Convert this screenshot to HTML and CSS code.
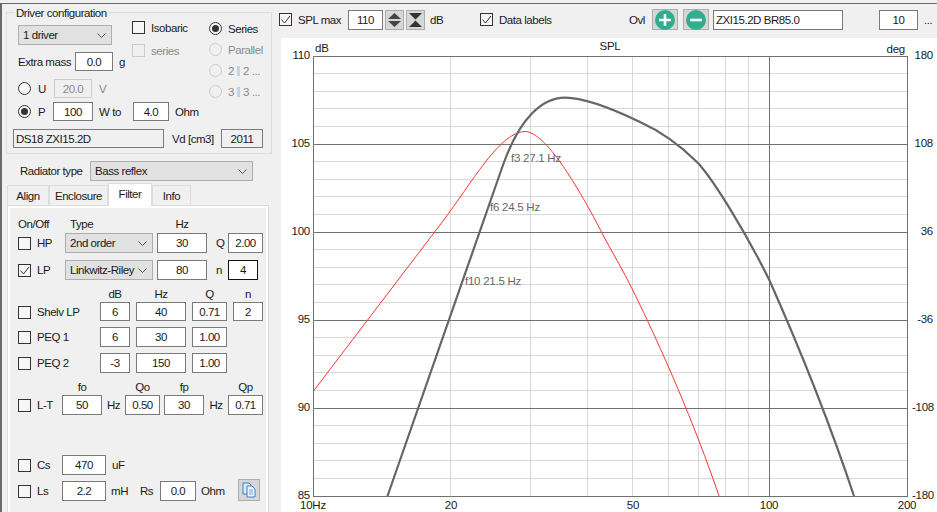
FILE: index.html
```html
<!DOCTYPE html>
<html lang="en">
<head>
    <meta charset="UTF-8">
    <title>Driver configuration</title>
    <link rel="stylesheet" href="styles.css">
</head>
<body>
<div class="app">
    <!-- left column -->
    <div class="side">
        <div class="group">
            <span class="legend">Driver configuration</span>
            <div class="config-top">
                <div class="config-left">
                    <div class="config-sub">
                        <div class="config-driver">
                            <div class="select driver-select">1 driver
                                <svg class="chev" viewBox="0 0 9 5"><path d="M.5.5l4 4 4-4"/></svg>
                            </div>
                            <div class="row extra-row">
                                <span class="extra-label">Extra mass</span>
                                <span class="field w38">0.0</span>
                                <span class="unit-g">g</span>
                            </div>
                        </div>
                        <div class="config-iso">
                            <div class="check"><i class="box"></i>Isobaric</div>
                            <div class="check off series-check"><i class="box"></i>series</div>
                        </div>
                    </div>
                    <div class="row u-row">
                        <div class="radio-wrap off-text"><i class="radio"></i><b>U</b></div>
                        <span class="field off w38">20.0</span>
                        <span class="unit off-text">V</span>
                    </div>
                    <div class="row p-row">
                        <div class="radio-wrap"><i class="radio on"></i><b>P</b></div>
                        <span class="field w40">100</span>
                        <span class="wto">W to</span>
                        <span class="field w36">4.0</span>
                        <span class="unit">Ohm</span>
                    </div>
                </div>
                <div class="config-right">
                    <div class="radio-line"><i class="radio on"></i>Series</div>
                    <div class="radio-line off"><i class="radio"></i>Parallel</div>
                    <div class="radio-line off"><i class="radio"></i>2 <em></em> 2 ...</div>
                    <div class="radio-line off"><i class="radio"></i>3 <em></em> 3 ...</div>
                </div>
            </div>
            <div class="row ds-row">
                <span class="field name">DS18 ZXI15.2D</span>
                <span class="vd">Vd [cm3]</span>
                <span class="field flat w42">2011</span>
            </div>
        </div>

        <div class="row radiator">
            <span class="radiator-label">Radiator type</span>
            <div class="select radiator-select">Bass reflex
                <svg class="chev" viewBox="0 0 9 5"><path d="M.5.5l4 4 4-4"/></svg>
            </div>
        </div>

        <div class="tabs">
            <span class="tab t-align">Align</span>
            <span class="tab t-encl">Enclosure</span>
            <span class="tab t-filter active">Filter</span>
            <span class="tab t-info">Info</span>
        </div>

        <div class="panel">
            <div class="filter">
                <div class="row head1">
                    <span class="h-onoff">On/Off</span>
                    <span class="h-type">Type</span>
                    <span class="h-hz">Hz</span>
                </div>
                <div class="row">
                    <div class="check c47"><i class="box"></i>HP</div>
                    <div class="select filter-select">2nd order
                        <svg class="chev" viewBox="0 0 9 5"><path d="M.5.5l4 4 4-4"/></svg>
                    </div>
                    <span class="field w50 ml4">30</span>
                    <span class="letter">Q</span>
                    <span class="field w35">2.00</span>
                </div>
                <div class="row lp-row">
                    <div class="check c47"><i class="box"><svg viewBox="0 0 11 11"><path d="M1.5 5.5l3 3.5 5.5-7"/></svg></i>LP</div>
                    <div class="select filter-select">Linkwitz-Riley
                        <svg class="chev" viewBox="0 0 9 5"><path d="M.5.5l4 4 4-4"/></svg>
                    </div>
                    <span class="field w50 ml4">80</span>
                    <span class="letter">n</span>
                    <span class="field w30 focus">4</span>
                </div>

                <div class="peq">
                    <span></span><span class="h">dB</span><span class="h">Hz</span><span class="h">Q</span><span class="h">n</span>
                    <div class="check"><i class="box"></i>Shelv LP</div>
                    <span class="field">6</span><span class="field">40</span><span class="field">0.71</span><span class="field">2</span>
                    <div class="check"><i class="box"></i>PEQ 1</div>
                    <span class="field">6</span><span class="field">30</span><span class="field">1.00</span><span></span>
                    <div class="check"><i class="box"></i>PEQ 2</div>
                    <span class="field">-3</span><span class="field">150</span><span class="field">1.00</span><span></span>
                </div>

                <div class="lt">
                    <span></span><span class="h">fo</span><span></span><span class="h">Qo</span><span></span><span class="h">fp</span><span></span><span class="h">Qp</span>
                    <div class="check"><i class="box"></i>L-T</div>
                    <span class="field">50</span><span class="mid">Hz</span><span class="field">0.50</span><span></span>
                    <span class="field">30</span><span class="mid">Hz</span><span class="field">0.71</span>
                </div>

                <div class="row cs-row">
                    <div class="check c44"><i class="box"></i>Cs</div>
                    <span class="field w44">470</span>
                    <span class="unit">uF</span>
                </div>
                <div class="row ls-row">
                    <div class="check c44"><i class="box"></i>Ls</div>
                    <span class="field w44">2.2</span>
                    <span class="mh">mH</span>
                    <span class="rs">Rs</span>
                    <span class="field w36">0.0</span>
                    <span class="unit ohm">Ohm</span>
                    <span class="btn copy">
                        <svg viewBox="0 0 14 16" width="14" height="16">
                            <path d="M1 1h6l2 2v9H1z" fill="#dce9f8" stroke="#3f7fc9"/>
                            <path d="M5 4h5l3 3v8H5z" fill="#eef4fb" stroke="#3f7fc9"/>
                            <path d="M7 8h4M7 10h4M7 12h4" stroke="#7da7da"/>
                        </svg>
                    </span>
                </div>
            </div>
        </div>
    </div>

    <!-- right column -->
    <div class="main">
        <div class="toolbar">
            <div class="check c69"><i class="box"><svg viewBox="0 0 11 11"><path d="M1.5 5.5l3 3.5 5.5-7"/></svg></i>SPL max</div>
            <span class="field w35">110</span>
            <span class="btn step">
                <svg viewBox="0 0 15 16" width="15" height="16"><path d="M7.5 1l6.5 6H1zM1 9h13l-6.5 6z" fill="#444"/></svg>
            </span>
            <span class="btn step">
                <svg viewBox="0 0 15 16" width="15" height="16"><path d="M1 1h13L7.5 7.5zM7.5 8.5L14 15H1z" fill="#333"/></svg>
            </span>
            <span class="db">dB</span>
            <div class="check c149"><i class="box"><svg viewBox="0 0 11 11"><path d="M1.5 5.5l3 3.5 5.5-7"/></svg></i>Data labels</div>
            <span class="ovl">Ovl</span>
            <span class="btn round">
                <svg viewBox="0 0 20 20" width="20" height="20"><circle cx="10" cy="10" r="10" fill="#2fae8f"/><path d="M10 4v12M4 10h12" stroke="#fff" stroke-width="2.6"/></svg>
            </span>
            <span class="btn round">
                <svg viewBox="0 0 20 20" width="20" height="20"><circle cx="10" cy="10" r="10" fill="#2fae8f"/><path d="M4 10h12" stroke="#fff" stroke-width="2.6"/></svg>
            </span>
            <span class="field overlay-name">ZXI15.2D BR85.0</span>
            <span class="field w39">10</span>
            <span class="dots">...</span>
        </div>

        <svg class="chart" viewBox="281 38 656 474" width="656" height="474">
            <path class="grid-minor" d="M314 73.5H907M314 91.5H907M314 108.5H907M314 126.5H907M314 161.5H907M314 179.5H907M314 196.5H907M314 214.5H907M314 249.5H907M314 267.5H907M314 284.5H907M314 302.5H907M314 337.5H907M314 355.5H907M314 372.5H907M314 390.5H907M314 425.5H907M314 443.5H907M314 460.5H907M314 478.5H907"/>
            <path class="grid-minor" d="M450.5 57V496M530.5 57V496M587.5 57V496M632.5 57V496M668.5 57V496M698.5 57V496M725.5 57V496M748.5 57V496"/>
            <path class="grid-major" d="M314 144.5H907M314 232.5H907M314 320.5H907M314 408.5H907M769.5 57V496"/>
            <rect class="grid-major" x="313.5" y="56.5" width="594" height="440"/>

            <path class="curve-red" d="M313.5 391L443 221C471 184 500 131.5 525 131.5C545 131.5 578 186 603 235C612 252 623 270 632.7 290C661 347 695 425 719 496"/>
            <path class="curve-gray" d="M387.5 496L503 165C520 117 543 97.7 565 97.7C585 97.7 615 110 640 122C660 131 682 147 698 163C716 183 748 237 769.3 280C792 331 828 418 854 496"/>

            <text class="data-label" x="511" y="162">f3 27.1 Hz</text>
            <text class="data-label" x="490" y="211">f6 24.5 Hz</text>
            <text class="data-label" x="465" y="285">f10 21.5 Hz</text>

            <text x="315" y="52">dB</text>
            <text x="610" y="50" text-anchor="middle">SPL</text>
            <text x="905" y="53" text-anchor="end">deg</text>

            <g text-anchor="end">
                <text x="310" y="59">110</text>
                <text x="310" y="147">105</text>
                <text x="310" y="235">100</text>
                <text x="310" y="323">95</text>
                <text x="310" y="411">90</text>
                <text x="310" y="499">85</text>
                <text x="933" y="59">180</text>
                <text x="933" y="147">108</text>
                <text x="933" y="235">36</text>
                <text x="933" y="323">-36</text>
                <text x="934" y="411">-108</text>
                <text x="934" y="499">-180</text>
            </g>
            <g text-anchor="middle">
                <text x="313" y="509">10Hz</text>
                <text x="451" y="509">20</text>
                <text x="633" y="509">50</text>
                <text x="769" y="509">100</text>
                <text x="907" y="509">200</text>
            </g>
        </svg>
    </div>
</div>
</body>
</html>
```

FILE: styles.css
```css
* {
    margin: 0;
    padding: 0;
    box-sizing: border-box;
}

body {
    width: 937px;
    height: 512px;
    overflow: hidden;
    background-color: #f0f0f0;
    font-family: "Liberation Sans", Arial, sans-serif;
    font-size: 11.5px;
    letter-spacing: -0.45px;
    color: #1a1a1a;
}

.app {
    display: flex;
    height: 509px;
    margin-top: 3px;
    border-top: 1px solid #6a6a6a;
    border-left: 2px solid #6a6a6a;
}

.side {
    width: 277px;
    flex: none;
}

.main {
    flex: 1;
    min-width: 0;
}

.row {
    display: flex;
    align-items: center;
}

/* form bits */
.field {
    display: flex;
    align-items: center;
    justify-content: center;
    height: 20px;
    flex: none;
    background-color: #fff;
    border: 1px solid #7a7a7a;
}

.field.off {
    background-color: #f0f0f0;
    border-color: #ccc;
    color: #8a8a8a;
}

.field.flat {
    background-color: #f0f0f0;
}

.field.focus {
    border-color: #111;
}

.field.name {
    width: 151px;
    justify-content: flex-start;
    padding-left: 2px;
    background-color: #f0f0f0;
}

.w30 { width: 30px; }
.w35 { width: 35px; }
.w36 { width: 36px; }
.w38 { width: 38px; }
.w39 { width: 39px; }
.w40 { width: 40px; }
.w42 { width: 42px; }
.w44 { width: 44px; }
.w50 { width: 50px; }
.ml4 { margin-left: 4px; }

.select {
    display: flex;
    align-items: center;
    justify-content: space-between;
    height: 20px;
    padding: 0 5px 0 4px;
    flex: none;
    background-color: #e1e1e1;
    border: 1px solid #adadad;
    white-space: nowrap;
}

.chev {
    width: 9px;
    height: 5px;
    flex: none;
}

.chev path {
    fill: none;
    stroke: #555;
}

.check {
    display: flex;
    align-items: center;
    gap: 6px;
    height: 20px;
    flex: none;
    white-space: nowrap;
}

.box {
    display: block;
    width: 13px;
    height: 13px;
    flex: none;
    border: 1px solid #333;
    background-color: #f6f6f6;
}

.box svg {
    display: block;
    width: 11px;
    height: 11px;
    fill: none;
    stroke: #333;
}

.check.off {
    color: #8a8a8a;
}

.check.off .box {
    border-color: #ccc;
    background-color: #f0f0f0;
}

.c44 { width: 44px; }
.c47 { width: 47px; }
.c69 { width: 69px; }
.c149 { width: 149px; }

.radio {
    display: block;
    position: relative;
    width: 13px;
    height: 13px;
    flex: none;
    border: 1px solid #333;
    border-radius: 50%;
    background-color: #f6f6f6;
}

.radio.on::after {
    content: "";
    position: absolute;
    top: 2px;
    left: 2px;
    width: 7px;
    height: 7px;
    border-radius: 50%;
    background-color: #333;
}

.btn {
    display: flex;
    align-items: center;
    justify-content: center;
    flex: none;
    background-color: #d6d6d6;
    border: 1px solid #adadad;
}

/* driver configuration group */
.group {
    position: relative;
    width: 266px;
    height: 142px;
    margin: 8px 0 0 4px;
    border: 1px solid #dcdcdc;
}

.legend {
    position: absolute;
    top: -7px;
    left: 8px;
    padding: 0 1px;
    background-color: #f0f0f0;
    line-height: 14px;
}

.config-top {
    display: flex;
    padding: 8px 0 0 11px;
}

.config-left {
    width: 191px;
    flex: none;
}

.config-sub {
    display: flex;
}

.config-driver {
    width: 114px;
    padding-top: 4px;
    flex: none;
}

.driver-select {
    width: 94px;
}

.extra-row {
    height: 19px;
    margin-top: 7px;
    white-space: nowrap;
}

.extra-label {
    width: 57px;
}

.unit-g {
    margin-left: 6px;
}

.config-iso .check {
    height: 13px;
}

.series-check {
    margin-top: 10px;
}

.u-row {
    height: 19px;
    margin-top: 8px;
}

.p-row {
    height: 19px;
    margin-top: 4px;
}

.u-row .field,
.p-row .field,
.extra-row .field,
.ds-row .field {
    height: 19px;
}

.radio-wrap {
    display: flex;
    align-items: center;
    gap: 7px;
    width: 36px;
    flex: none;
}

.p-row .radio-wrap {
    width: 35px;
}

.radio-wrap b {
    font-weight: normal;
    color: #1a1a1a;
}

.off-text {
    color: #8a8a8a;
}

.unit {
    margin-left: 6px;
}

.u-row .unit {
    margin-left: 7px;
}

.wto {
    width: 40px;
    padding-left: 6px;
}

.config-right {
    padding-top: 1px;
}

.radio-line {
    display: flex;
    align-items: center;
    gap: 6px;
    height: 13px;
    margin-bottom: 8px;
    white-space: nowrap;
}

.radio-line.off {
    color: #8a8a8a;
}

.radio-line.off .radio {
    border-color: #ccc;
    background-color: #f0f0f0;
}

.radio-line em {
    width: 3px;
    height: 10px;
    margin: 0 -3px;
    background-color: #c5d3e3;
}

.ds-row {
    margin: 8px 0 0 6px;
}

.vd {
    width: 49px;
    margin-left: 8px;
}

/* radiator and tabs */
.radiator {
    margin: 7px 0 0 18px;
}

.radiator-label {
    width: 70px;
}

.radiator-select {
    width: 163px;
}

.tabs {
    display: flex;
    position: relative;
    height: 20px;
    margin: 4px 0 0 5px;
}

.tab {
    display: flex;
    align-items: center;
    justify-content: center;
    height: 20px;
    border: 1px solid #dcdcdc;
    border-bottom: none;
}

.tab.active {
    position: relative;
    height: 23px;
    margin-top: -2px;
    padding-bottom: 3px;
    background-color: #fff;
    z-index: 1;
}

.t-align { width: 42px; }
.t-encl { width: 59px; }
.t-filter { width: 44px; }
.t-info { width: 39px; }

.panel {
    width: 262px;
    height: 320px;
    margin-left: 5px;
    padding: 2px;
    background-color: #fff;
    border: 1px solid #dcdcdc;
}

.filter {
    height: 100%;
    padding: 9px 0 0 8px;
    background-color: #f0f0f0;
}

/* filter rows */
.head1 {
    height: 14px;
    margin-bottom: 2px;
}

.h-onoff { width: 52px; }
.h-type { width: 87px; }
.h-hz {
    width: 50px;
    text-align: center;
}

.filter-select {
    width: 88px;
}

.letter {
    width: 21px;
    padding-left: 9px;
}

.lp-row {
    margin-top: 7px;
}

.h {
    text-align: center;
    line-height: 14px;
}

.peq {
    display: grid;
    grid-template-columns: 76px 30px 50px 35px 30px;
    grid-template-rows: 9px 19px 20px 20px;
    gap: 6px;
    margin-top: 7px;
}

.peq .field {
    height: 100%;
}

.lt {
    display: grid;
    grid-template-columns: 44px 40px 23px 35px 4px 40px 24px 35px;
    grid-template-rows: 15px 20px;
    margin-top: 7px;
}

.mid {
    display: flex;
    align-items: center;
    justify-content: center;
}

.cs-row {
    margin-top: 40px;
}

.ls-row {
    margin-top: 6px;
}

.mh {
    width: 34px;
    padding-left: 5px;
}

.rs {
    width: 20px;
}

.ohm {
    width: 37px;
    margin-left: 5px;
}

.copy {
    width: 22px;
    height: 22px;
    margin-top: -2px;
}

/* toolbar above the chart */
.toolbar {
    display: flex;
    align-items: center;
    height: 34px;
    padding-bottom: 3px;
}

.step {
    width: 19px;
    height: 20px;
    margin-left: 2px;
}

.db {
    width: 55px;
    padding-left: 5px;
}

.ovl {
    width: 23px;
}

.round {
    width: 26px;
    height: 21px;
    margin-right: 5px;
}

.round + .round {
    margin-right: 4px;
}

.overlay-name {
    width: 130px;
    margin-right: 36px;
    justify-content: flex-start;
    padding-left: 2px;
}

.dots {
    margin-left: 6px;
}

/* chart */
.chart {
    display: block;
    margin-left: 2px;
    background-color: #fff;
}

.chart text {
    font-family: "Liberation Sans", Arial, sans-serif;
    font-size: 11.5px;
    letter-spacing: -0.25px;
    fill: #1a1a1a;
}

.chart .data-label {
    fill: #666;
}

.grid-minor {
    fill: none;
    stroke: #d9d9d9;
    stroke-width: 1;
}

.grid-major {
    fill: none;
    stroke: #707070;
    stroke-width: 1;
}

.curve-red,
.curve-gray {
    fill: none;
    stroke-linejoin: round;
}

.curve-red {
    stroke: #f33;
    stroke-width: 1;
}

.curve-gray {
    stroke: #666;
    stroke-width: 2.2;
}
```
